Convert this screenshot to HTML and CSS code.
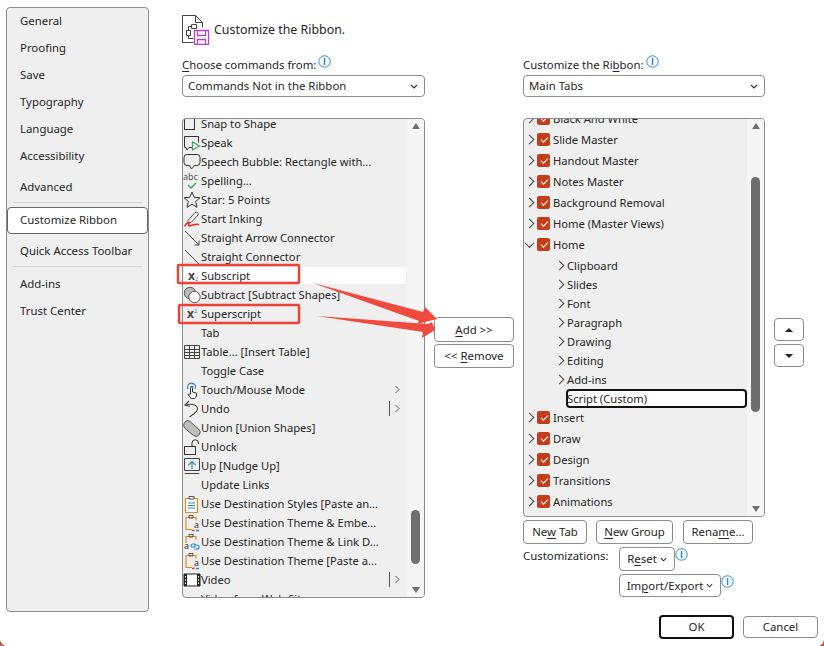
FILE: index.html
```html
<!DOCTYPE html>
<html lang="en">
<head>
<meta charset="utf-8">
<title>Customize the Ribbon</title>
<link rel="stylesheet" href="styles.css">
</head>
<body>
<div class="dialog">
  <nav class="sidebar">
    <a class="nav">General</a>
    <a class="nav">Proofing</a>
    <a class="nav">Save</a>
    <a class="nav">Typography</a>
    <a class="nav">Language</a>
    <a class="nav">Accessibility</a>
    <a class="nav nav-gap">Advanced</a>
    <div class="sep"></div>
    <a class="nav nav-active">Customize Ribbon</a>
    <a class="nav nav-quick">Quick Access Toolbar</a>
    <div class="sep"></div>
    <a class="nav nav-quick">Add-ins</a>
    <a class="nav">Trust Center</a>
  </nav>

  <main class="main">
    <header class="header">
      <svg class="head-icon" width="28" height="30" viewBox="0 0 28 30" fill="none">
        <path d="M.5 27.500V.500h13l7 7v5M13.500.500v7h7M.5 27.500h11" stroke="#444"/>
        <path d="M4.500 15.500h4v5h-4zM6.500 15.500v-4h3M9.500 9.500h5v4h-5zM6.500 20.500v3h5" stroke="#444"/>
        <path d="M12.500 15.500h14v14h-14z" fill="#fff" stroke="#b146c2" stroke-width="1.300"/>
        <path d="M15.500 15.500v5h8v-5M15.500 29.500v-5h8v5" stroke="#b146c2" stroke-width="1.300"/>
      </svg>
      <h1 class="title">Customize the Ribbon.</h1>
    </header>

    <div class="columns">
      <section class="col">
        <div class="label-row"><span class="label"><u>C</u>hoose commands from:</span>
          <svg class="info" width="13" height="13" viewBox="0 0 13 13"><circle cx="6.500" cy="6.500" r="5.700" fill="#fff" stroke="#2b88d8"/><rect x="5.800" y="3" width="1.500" height="7" fill="#2b88d8"/></svg>
        </div>
        <div class="select"><span>Commands Not in the Ribbon</span>
          <svg width="8" height="5" viewBox="0 0 8 5"><path d="M1 1l3 3 3-3" fill="none" stroke="#333" stroke-width="1.200"/></svg>
        </div>
        <div class="list list-left">
          <div class="rows rows-left">
            <div class="row"><svg class="ic" width="18" height="18" viewBox="0 0 18 18" fill="none"><rect x="1.500" y="3.500" width="10" height="11" stroke="#333"/><path d="M13 1l2 2" stroke="#2b88d8"/></svg><span>Snap to Shape</span></div>
            <div class="row"><svg class="ic" width="18" height="18" viewBox="0 0 18 18" fill="none"><path d="M9 13.500H6l-2 2.500-1-2.500H1.500v-11h14v6" stroke="#333"/><path d="M9.500 8v8l7-4z" fill="#fff" stroke="#3aa655" stroke-width="1.200"/></svg><span>Speak</span></div>
            <div class="row"><svg class="ic" width="18" height="18" viewBox="0 0 18 18" fill="none"><path d="M4 1.500h10a3 3 0 0 1 3 3v5a3 3 0 0 1-3 3h-2.500L8.500 16l-2-3.500H4a3 3 0 0 1-3-3v-5a3 3 0 0 1 3-3z" stroke="#333"/></svg><span>Speech Bubble: Rectangle with...</span></div>
            <div class="row"><span class="abc">abc<svg class="abc-check" width="12" height="7" viewBox="0 0 12 7" fill="none"><path d="M2 3l3 3 5-5" stroke="#3aa655" stroke-width="1.300"/></svg></span><span>Spelling...</span></div>
            <div class="row"><svg class="ic" width="18" height="18" viewBox="0 0 18 18" fill="none"><path d="M9 1l2.300 5.400 5.700.4-4.400 3.700 1.400 5.800L9 13.200l-5 3.100 1.400-5.800L1 6.800l5.700-.4z" stroke="#333"/></svg><span>Star: 5 Points</span></div>
            <div class="row"><svg class="ic" width="18" height="18" viewBox="0 0 18 18" fill="none"><path d="M5 10.500L12 2.500a2 2 0 0 1 3 2.500L8 12.500l-3 1z" stroke="#555"/><path d="M1.500 16.500c2-4 5-5 4.500-3s-1 3 2 2 4-1.500 8-1" stroke="#e0352b" stroke-width="1.600"/></svg><span>Start Inking</span></div>
            <div class="row"><svg class="ic" width="18" height="18" viewBox="0 0 18 18" fill="none"><path d="M2 2l14 14M16 11.500V16h-4.500" stroke="#444"/></svg><span>Straight Arrow Connector</span></div>
            <div class="row"><svg class="ic" width="18" height="18" viewBox="0 0 18 18" fill="none"><path d="M2 2l14 14" stroke="#444"/></svg><span>Straight Connector</span></div>
            <div class="row row-sel"><span class="xs">x<sub class="xsub">2</sub></span><span>Subscript</span></div>
            <div class="row"><svg class="ic" width="18" height="18" viewBox="0 0 18 18"><circle cx="7" cy="7" r="5.700" fill="#bbb" stroke="#555"/><circle cx="11.500" cy="11" r="5.700" fill="#fff" stroke="#555"/></svg><span>Subtract [Subtract Shapes]</span></div>
            <div class="row"><span class="xs">x<sup class="xsup">2</sup></span><span>Superscript</span></div>
            <div class="row"><span class="ic-blank"></span><span>Tab</span></div>
            <div class="row"><svg class="ic" width="18" height="18" viewBox="0 0 18 18" fill="none"><path d="M1.500 2.500h15v13h-15zM1.500 6.500h15M1.500 9.500h15M1.500 12.500h15M6.500 2.500v13M11.500 2.500v13" stroke="#444"/></svg><span>Table... [Insert Table]</span></div>
            <div class="row"><span class="ic-blank"></span><span>Toggle Case</span></div>
            <div class="row"><svg class="ic" width="18" height="18" viewBox="0 0 18 18" fill="none"><path d="M5 8a4 4 0 1 1 7 0" stroke="#2b88d8" stroke-width="1.200"/><path d="M7.500 5.500h3" stroke="#2b88d8"/><path d="M7.500 13V7a1 1 0 0 1 2 0v4l4 1v3l-2 2.500H8L5 13.500z" fill="#fff" stroke="#333"/></svg><span>Touch/Mouse Mode</span><svg class="more" width="7" height="9" viewBox="0 0 7 9" fill="none"><path d="M1.500 1l3.500 3.500L1.500 8" stroke="#555"/></svg></div>
            <div class="row"><svg class="ic" width="18" height="18" viewBox="0 0 18 18" fill="none"><path d="M6 1L2 5l5 1.500M2.500 5.500c6-3 12 0 12 3.500 0 3-4 5-8 8" stroke="#444" stroke-width="1.100"/></svg><span>Undo</span><span class="split"></span><svg class="more" width="7" height="9" viewBox="0 0 7 9" fill="none"><path d="M1.500 1l3.500 3.500L1.500 8" stroke="#555"/></svg></div>
            <div class="row"><svg class="ic" width="18" height="18" viewBox="0 0 18 18"><path d="M4.500 1.500a4 4 0 0 1 2.500 1l8.500 7.500a4 4 0 0 1-5 6.500l-8.500-7A4.800 4.800 0 0 1 4.500 1.500z" fill="#bdbdbd" stroke="#555"/></svg><span>Union [Union Shapes]</span></div>
            <div class="row"><svg class="ic" width="18" height="18" viewBox="0 0 18 18" fill="none"><rect x="1.500" y="8.500" width="11" height="8" stroke="#333"/><path d="M9 8.500V5a3.200 3.200 0 0 1 6.500 0v1" stroke="#333"/></svg><span>Unlock</span></div>
            <div class="row"><svg class="ic" width="18" height="18" viewBox="0 0 18 18" fill="none"><path d="M1.500 1.500h15v12h-15zM1.500 16.500h15" stroke="#444"/><path d="M9 12V4.500M5.500 8L9 4.500 12.500 8" stroke="#2b88d8" stroke-width="1.200"/></svg><span>Up [Nudge Up]</span></div>
            <div class="row"><span class="ic-blank"></span><span>Update Links</span></div>
            <div class="row"><svg class="ic" width="18" height="18" viewBox="0 0 18 18" fill="none"><path d="M2.500 3.500h12v14h-12z" fill="#fff" stroke="#e8891c" stroke-width="1.200"/><path d="M6 4V1.500h5V4z" fill="#fff" stroke="#555"/><path d="M5 8h7M5 10.500h7M5 13h7" stroke="#2b88d8"/></svg><span>Use Destination Styles [Paste an...</span></div>
            <div class="row"><svg class="ic" width="18" height="18" viewBox="0 0 18 18" fill="none"><path d="M9 15.500H3v-12h10v3" stroke="#e8891c" stroke-width="1.200"/><path d="M6 4V1.500h4V4z" stroke="#555"/><text class="ic-a" x="11" y="14">a</text><path d="M9 16.500h2.500" stroke="#e0352b" stroke-width="1.500"/><path d="M13 16.500h3" stroke="#2b88d8" stroke-width="1.500"/></svg><span>Use Destination Theme &amp; Embe...</span></div>
            <div class="row"><svg class="ic" width="18" height="18" viewBox="0 0 18 18" fill="none"><path d="M3 10V3.500h10v3" stroke="#e8891c" stroke-width="1.200"/><path d="M6 4V1.500h4V4z" stroke="#555"/><text class="ic-a" x="1" y="16">a</text><path d="M8 13a2 2 0 0 1 2-2h2v3h-2a2 2 0 0 1-2-1zM12 12h2a2 2 0 0 1 0 4h-3" stroke="#2b88d8" stroke-width="1.200"/></svg><span>Use Destination Theme &amp; Link D...</span></div>
            <div class="row"><svg class="ic" width="18" height="18" viewBox="0 0 18 18" fill="none"><path d="M9 15.500H3v-12h10v3" stroke="#e8891c" stroke-width="1.200"/><path d="M6 4V1.500h4V4z" stroke="#555"/><text class="ic-a" x="11" y="14">a</text><path d="M9 16.500h2.500" stroke="#e0352b" stroke-width="1.500"/><path d="M13 16.500h3" stroke="#2b88d8" stroke-width="1.500"/></svg><span>Use Destination Theme [Paste a...</span></div>
            <div class="row"><svg class="ic" width="18" height="18" viewBox="0 0 18 18"><path d="M1 3h16v12H1z" fill="#fff" stroke="#222"/><path d="M1 3h3v12H1zM14 3h3v12h-3z" fill="#222"/><path d="M2 5h1v1.500H2zM2 8.300h1v1.500H2zM2 11.500h1V13H2zM15 5h1v1.500h-1zM15 8.300h1v1.500h-1zM15 11.500h1V13h-1z" fill="#fff"/></svg><span>Video</span><span class="split"></span><svg class="more" width="7" height="9" viewBox="0 0 7 9" fill="none"><path d="M1.500 1l3.500 3.500L1.500 8" stroke="#555"/></svg></div>
            <div class="row"><span class="ic-blank"></span><span>Video from Web Site</span></div>
          </div>
          <div class="scrollbar">
            <span class="tri-up"></span>
            <span class="thumb thumb-left"></span>
            <span class="tri-down"></span>
          </div>
        </div>
      </section>

      <section class="mid">
        <button class="btn btn-add"><span><u>A</u>dd &gt;&gt;</span></button>
        <button class="btn btn-remove"><span>&lt;&lt; <u>R</u>emove</span></button>
      </section>

      <section class="col col-right">
        <div class="label-row"><span class="label">Customize the Ri<u>b</u>bon:</span>
          <svg class="info" width="13" height="13" viewBox="0 0 13 13"><circle cx="6.500" cy="6.500" r="5.700" fill="#fff" stroke="#2b88d8"/><rect x="5.800" y="3" width="1.500" height="7" fill="#2b88d8"/></svg>
        </div>
        <div class="select"><span>Main Tabs</span>
          <svg width="8" height="5" viewBox="0 0 8 5"><path d="M1 1l3 3 3-3" fill="none" stroke="#333" stroke-width="1.200"/></svg>
        </div>
        <div class="list list-right">
          <div class="rows rows-right">
            <div class="tab"><i class="chev"></i><i class="check"></i><span>Black And White</span></div>
            <div class="tab"><i class="chev"></i><i class="check"></i><span>Slide Master</span></div>
            <div class="tab"><i class="chev"></i><i class="check"></i><span>Handout Master</span></div>
            <div class="tab"><i class="chev"></i><i class="check"></i><span>Notes Master</span></div>
            <div class="tab"><i class="chev"></i><i class="check"></i><span>Background Removal</span></div>
            <div class="tab"><i class="chev"></i><i class="check"></i><span>Home (Master Views)</span></div>
            <div class="tab tab-open"><i class="chev chev-open"></i><i class="check"></i><span>Home</span></div>
            <div class="group"><i class="chev"></i><span>Clipboard</span></div>
            <div class="group"><i class="chev"></i><span>Slides</span></div>
            <div class="group"><i class="chev"></i><span>Font</span></div>
            <div class="group"><i class="chev"></i><span>Paragraph</span></div>
            <div class="group"><i class="chev"></i><span>Drawing</span></div>
            <div class="group"><i class="chev"></i><span>Editing</span></div>
            <div class="group"><i class="chev"></i><span>Add-ins</span></div>
            <div class="group-custom"><span>Script (Custom)</span></div>
            <div class="tab"><i class="chev"></i><i class="check"></i><span>Insert</span></div>
            <div class="tab"><i class="chev"></i><i class="check"></i><span>Draw</span></div>
            <div class="tab"><i class="chev"></i><i class="check"></i><span>Design</span></div>
            <div class="tab"><i class="chev"></i><i class="check"></i><span>Transitions</span></div>
            <div class="tab"><i class="chev"></i><i class="check"></i><span>Animations</span></div>
          </div>
          <div class="scrollbar">
            <span class="tri-up"></span>
            <span class="thumb thumb-right"></span>
            <span class="tri-down"></span>
          </div>
        </div>
        <div class="btn-row">
          <button class="btn btn-newtab"><span>Ne<u>w</u> Tab</span></button>
          <button class="btn btn-newgroup"><span><u>N</u>ew Group</span></button>
          <button class="btn btn-rename"><span>Rena<u>m</u>e...</span></button>
        </div>
        <div class="custom">
          <span class="custom-label">Customizations:</span>
          <div class="custom-btns">
            <div class="custom-line">
              <button class="btn btn-reset"><span>R<u>e</u>set</span><svg width="7" height="5" viewBox="0 0 8 5"><path d="M1 1l3 3 3-3" fill="none" stroke="#333" stroke-width="1.200"/></svg></button>
              <svg class="info" width="13" height="13" viewBox="0 0 13 13"><circle cx="6.500" cy="6.500" r="5.700" fill="#fff" stroke="#2b88d8"/><rect x="5.800" y="3" width="1.500" height="7" fill="#2b88d8"/></svg>
            </div>
            <div class="custom-line">
              <button class="btn btn-import"><span>Im<u>p</u>ort/Export</span><svg width="7" height="5" viewBox="0 0 8 5"><path d="M1 1l3 3 3-3" fill="none" stroke="#333" stroke-width="1.200"/></svg></button>
              <svg class="info" width="13" height="13" viewBox="0 0 13 13"><circle cx="6.500" cy="6.500" r="5.700" fill="#fff" stroke="#2b88d8"/><rect x="5.800" y="3" width="1.500" height="7" fill="#2b88d8"/></svg>
            </div>
          </div>
        </div>
      </section>

      <section class="order">
        <button class="btn btn-order"><i class="mini-up"></i></button>
        <button class="btn btn-order"><i class="mini-down"></i></button>
      </section>
    </div>

    <footer class="footer">
      <button class="btn btn-ok">OK</button>
      <button class="btn btn-cancel">Cancel</button>
    </footer>
  </main>

  <svg class="annot" width="824" height="646" viewBox="0 0 824 646" fill="none">
    <rect x="178" y="265" width="121" height="18" rx="1" stroke="#ef4136" stroke-width="2.500"/>
    <rect x="179" y="305" width="120" height="18" rx="1" stroke="#ef4136" stroke-width="2.500"/>
    <path d="M313 283L423 312 425 307 437 319 417 324 419 321z" fill="#f04a3e"/>
    <path d="M317 316L428 324 432 322 435 330 422 338 423 332z" fill="#f04a3e"/>
    <path d="M0 640c1 3 3 5 5 6H0z" fill="#c9544a"/>
    <path d="M824 640c-1 3-2 5-5 6h5z" fill="#c9544a"/>
  </svg>
</div>
</body>
</html>
```
FILE: styles.css
```css
* { box-sizing: border-box; }
html, body { margin: 0; padding: 0; background: #fff; }
body { width: 824px; height: 646px; overflow: hidden; font: 11.4px/16px "Noto Sans", "Open Sans", sans-serif; color: #262626; }
u { text-underline-offset: 2px; }

.dialog { position: relative; display: flex; width: 824px; height: 646px; }

/* sidebar */
.sidebar { width: 143px; height: 605px; margin: 7px 0 0 6px; background: #efefef; border: 1px solid #8c8c8c; border-radius: 4px; display: flex; flex-direction: column; flex: none; }
.nav { display: flex; align-items: center; height: 27px; padding: 0 0 1px 13px; flex: none; }
.nav-gap { margin-top: 4px; }
.sep { height: 1px; background: #d4d4d4; margin: 1px 6px 0; flex: none; }
.nav-active { margin-top: 4px; padding-left: 12px; background: #fff; border: 1px solid #666; border-radius: 4px; width: 141px; }
.nav-quick { margin-top: 4px; }

/* main */
.main { flex: none; width: 636px; margin-left: 33px; padding-top: 15px; display: flex; flex-direction: column; }
.header { display: flex; align-items: center; height: 30px; margin-bottom: 10px; gap: 4px; flex: none; }
.head-icon { flex: none; }
.title { margin: 0; font-size: 12.4px; font-weight: 400; line-height: 16px; }

.columns { display: flex; gap: 9px; height: 560px; flex: none; }
.col { width: 243px; flex: none; display: flex; flex-direction: column; }
.col-right { width: 242px; }
.label-row { height: 20px; display: flex; align-items: flex-start; gap: 2px; padding-top: 2px; flex: none; }
.label { line-height: 16px; }
.info { flex: none; margin-top: -2px; }
.select { height: 22px; background: #fff; border: 1px solid #8c8c8c; border-radius: 4px; display: flex; align-items: center; justify-content: space-between; padding: 0 6px 0 5px; flex: none; }

.list { margin-top: 21px; background: #efefef; border: 1px solid #8c8c8c; border-radius: 4px; display: flex; overflow: hidden; flex: none; }
.list-left { height: 480px; }
.list-right { height: 399px; }
.rows { flex: 1; overflow: hidden; min-width: 0; font-size: 11.2px; }
.rows-left { margin-top: -5px; }
.rows-right { margin-top: -11px; }
.scrollbar { width: 17px; flex: none; background: #f5f5f5; display: flex; flex-direction: column; align-items: center; position: relative; }
.tri-up { width: 0; height: 0; border: 4.500px solid transparent; border-top: 0; border-bottom: 6px solid #6f6f6f; margin-top: 4px; }
.tri-down { width: 0; height: 0; border: 4.500px solid transparent; border-bottom: 0; border-top: 6px solid #6f6f6f; margin-top: auto; margin-bottom: 4px; }
.thumb { position: absolute; width: 9px; background: #6e6e6e; border-radius: 4.500px; }
.thumb-left { top: 391px; height: 54px; }
.thumb-right { top: 58px; height: 235px; }

/* left rows */
.row { height: 19px; display: flex; align-items: center; white-space: nowrap; position: relative; }
.row-sel { background: #fff; background-clip: padding-box; border-top: 1px solid transparent; border-bottom: 1px solid transparent; border-radius: 3px; margin: 0 1px; padding-left: 0; }
.ic { flex: none; }
.ic-blank { width: 18px; flex: none; }
.ic-a { font: 9px "Noto Sans", sans-serif; fill: #333; }
.abc { width: 18px; flex: none; font-size: 9px; line-height: 9px; color: #555; position: relative; height: 18px; }
.abc-check { position: absolute; left: 3px; top: 10px; }
.xs { width: 18px; flex: none; font-weight: 700; font-size: 12px; padding-left: 4px; color: #444; display: flex; align-items: center; }
.row-sel .xs { width: 17px; }
.xsub, .xsup { font-size: 6px; line-height: 6px; color: #2b88d8; font-weight: 400; }
.xsub { align-self: flex-end; margin-bottom: 2px; }
.xsup { align-self: flex-start; margin-top: 2px; }
.more { position: absolute; right: 6px; top: 5px; }
.split { position: absolute; right: 17px; top: 2px; width: 1px; height: 15px; background: #555; }

/* right rows */
.tab { height: 21px; display: flex; align-items: center; padding-left: 3px; white-space: nowrap; }
.tab-open { margin-bottom: 1px; }
.group { height: 19px; display: flex; align-items: center; padding-left: 33px; white-space: nowrap; }
.group .chev { margin-right: 4px; }
.group-custom { height: 19px; margin: 0 0 -1px 42px; width: 181px; border: 2px solid #111; border-radius: 4px; background: #fff; display: flex; align-items: center; white-space: nowrap; }
.group-custom span { margin-left: -1px; }
.chev { width: 7px; height: 7px; flex: none; border-top: 1px solid #444; border-right: 1px solid #444; transform: rotate(45deg); margin-right: 4px; margin-left: -1px; }
.chev-open { transform: rotate(135deg) translate(-1px, 1px); }
.check { width: 13px; height: 13px; flex: none; background: #c43e1c; border-radius: 2px; position: relative; margin-right: 3px; }
.check::after { content: ""; position: absolute; left: 3.500px; top: 3.500px; width: 6px; height: 3px; border-left: 1.500px solid #fff; border-bottom: 1.500px solid #fff; transform: rotate(-45deg); }

/* buttons */
.btn { font: inherit; color: inherit; background: #fff; border: 1px solid #8c8c8c; border-radius: 4px; padding: 0; display: flex; align-items: center; justify-content: center; gap: 3px; flex: none; }
.mid { width: 80px; flex: none; display: flex; flex-direction: column; padding-top: 262px; gap: 2px; }
.btn-add { height: 25px; width: 80px; }
.btn-remove { height: 24px; width: 80px; }

.btn-row { display: flex; margin-top: 3px; flex: none; }
.btn-newtab { width: 64px; height: 24px; }
.btn-newgroup { width: 77px; height: 24px; margin-left: 9px; }
.btn-rename { width: 70px; height: 24px; margin-left: 10px; }

.custom { display: flex; margin-top: 3px; }
.custom-label { width: 96px; padding-top: 1px; flex: none; }
.custom-btns { display: flex; flex-direction: column; gap: 3px; }
.custom-line { display: flex; align-items: flex-start; }
.btn-reset { width: 56px; height: 24px; }
.btn-import { width: 102px; height: 23px; }
.custom-line .info { margin-top: 1px; }

.order { width: 30px; flex: none; padding-top: 263px; display: flex; flex-direction: column; gap: 3px; }
.btn-order { width: 30px; height: 23px; }
.mini-up { width: 0; height: 0; border: 4px solid transparent; border-top: 0; border-bottom: 4px solid #222; }
.mini-down { width: 0; height: 0; border: 4px solid transparent; border-bottom: 0; border-top: 4px solid #222; }

/* footer */
.footer { display: flex; justify-content: flex-end; align-items: center; gap: 9px; height: 24px; flex: none; }
.btn-ok { width: 75px; height: 24px; border: 2px solid #111; }
.btn-cancel { width: 75px; height: 22px; }

.annot { position: absolute; left: 0; top: 0; pointer-events: none; }
```
